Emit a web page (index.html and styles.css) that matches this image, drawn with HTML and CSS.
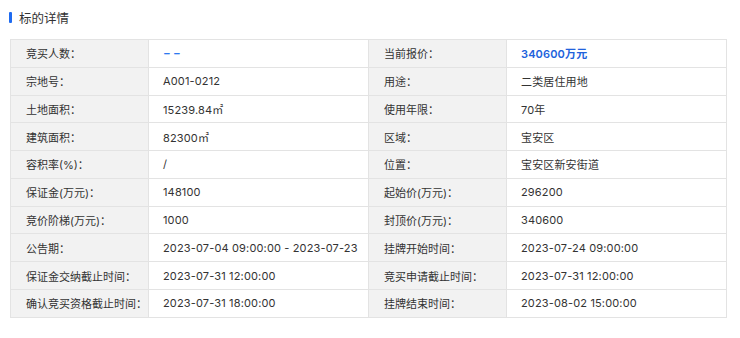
FILE: index.html
```html
<!DOCTYPE html>
<html lang="zh-CN">
<head>
<meta charset="utf-8">
<title>标的详情</title>
<link rel="stylesheet" href="styles.css">
</head>
<body>
<div class="page">
  <h2 class="title"><span class="bar"></span>标的详情</h2>
  <table class="detail">
    <colgroup>
      <col class="c-label"><col class="c-value"><col class="c-label"><col class="c-value2">
    </colgroup>
    <tbody>
      <tr><td class="lbl">竞买人数：</td><td class="val"><span class="dash">--</span></td><td class="lbl">当前报价：</td><td class="val price">340600万元</td></tr>
      <tr><td class="lbl">宗地号：</td><td class="val">A001-0212</td><td class="lbl">用途：</td><td class="val">二类居住用地</td></tr>
      <tr><td class="lbl">土地面积：</td><td class="val">15239.84㎡</td><td class="lbl">使用年限：</td><td class="val">70年</td></tr>
      <tr><td class="lbl">建筑面积：</td><td class="val">82300㎡</td><td class="lbl">区域：</td><td class="val">宝安区</td></tr>
      <tr><td class="lbl">容积率(%)：</td><td class="val">/</td><td class="lbl">位置：</td><td class="val">宝安区新安街道</td></tr>
      <tr><td class="lbl">保证金(万元)：</td><td class="val">148100</td><td class="lbl">起始价(万元)：</td><td class="val">296200</td></tr>
      <tr><td class="lbl">竞价阶梯(万元)：</td><td class="val">1000</td><td class="lbl">封顶价(万元)：</td><td class="val">340600</td></tr>
      <tr><td class="lbl">公告期：</td><td class="val">2023-07-04 09:00:00 - 2023-07-23</td><td class="lbl">挂牌开始时间：</td><td class="val">2023-07-24 09:00:00</td></tr>
      <tr><td class="lbl">保证金交纳截止时间：</td><td class="val">2023-07-31 12:00:00</td><td class="lbl">竞买申请截止时间：</td><td class="val">2023-07-31 12:00:00</td></tr>
      <tr><td class="lbl">确认竞买资格截止时间：</td><td class="val">2023-07-31 18:00:00</td><td class="lbl">挂牌结束时间：</td><td class="val">2023-08-02 15:00:00</td></tr>
    </tbody>
  </table>
</div>
</body>
</html>
```
FILE: styles.css
```css
* { box-sizing: border-box; }
html, body { margin: 0; padding: 0; background: #fff; }
body {
  font-family: Inter, "Noto Sans CJK SC", sans-serif;
  color: #333;
  font-size: 11px;
}
.page { padding: 9px 14px 0 10px; }
.title {
  margin: 0;
  display: flex;
  align-items: center;
  gap: 7px;
  height: 17px;
  font-size: 12.5px;
  font-weight: normal;
  color: #333;
  margin-left: -1px;
}
.bar {
  display: inline-block;
  width: 3px;
  height: 11px;
  background: #1f6bf0;
  border-radius: 1px;
}
.detail {
  margin-top: 13px;
  width: 716px;
  border-collapse: collapse;
  table-layout: fixed;
}
.c-label { width: 138px; }
.c-value { width: 220px; }
.c-value2 { width: 220px; }
.detail td {
  height: 27.77px;
  border: 1px solid #e3e3e3;
  padding: 0 0 0 14px;
  white-space: nowrap;
  vertical-align: middle;
}
.detail td.val { letter-spacing: 0.15px; }
.detail td.lbl { background: #f2f2f2; padding-left: 15px; }
.dash {
  display: inline-block;
  color: #2f78f0;
  font-weight: 700;
  letter-spacing: 1.5px;
  transform: scaleX(1.5);
  transform-origin: left center;
}
.price { color: #2162dc; font-weight: 600; letter-spacing: 0; }
```
